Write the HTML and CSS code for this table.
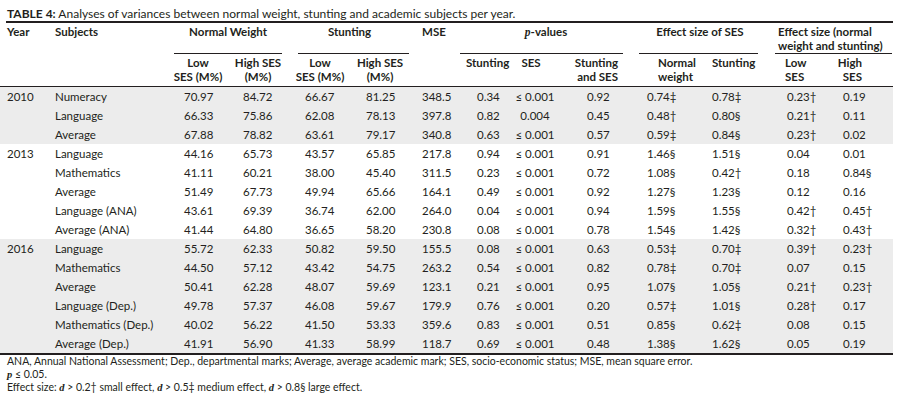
FILE: index.html
```html
<!DOCTYPE html>
<html lang="en">
<head>
<meta charset="utf-8">
<title>Table 4</title>
<link rel="stylesheet" href="styles.css">
</head>
<body>
<div class="page">
  <p class="title"><b>TABLE 4:</b> Analyses of variances between normal weight, stunting and academic subjects per year.</p>
  <table class="t">
    <colgroup>
      <col class="w1"><col class="w2"><col class="w3"><col class="w4"><col class="w5"><col class="w6"><col class="w7">
      <col class="w8"><col class="w9"><col class="w10"><col class="w11"><col class="w12"><col class="w13"><col class="w14">
    </colgroup>
    <thead>
      <tr class="h1">
        <th class="c1">Year</th>
        <th class="c2">Subjects</th>
        <th colspan="2"><div class="grp g-nw">Normal Weight</div></th>
        <th colspan="2"><div class="grp g-st">Stunting</div></th>
        <th class="c7">MSE</th>
        <th colspan="3"><div class="grp g-p"><i class="it">p</i>-values</div></th>
        <th colspan="2"><div class="grp g-es">Effect size of SES</div></th>
        <th colspan="2"><div class="grp g-en">Effect size (normal<br>weight and stunting)</div></th>
      </tr>
      <tr class="h2">
        <th></th>
        <th></th>
        <th class="s3">Low<br>SES (M%)</th>
        <th class="s4">High SES<br>(M%)</th>
        <th class="s5">Low<br>SES (M%)</th>
        <th class="s6">High SES<br>(M%)</th>
        <th></th>
        <th class="s8">Stunting</th>
        <th class="s9">SES</th>
        <th class="s10">Stunting<br>and SES</th>
        <th class="s11">Normal<br>weight</th>
        <th class="s12">Stunting</th>
        <th class="s13">Low<br>SES</th>
        <th class="s14">High<br>SES</th>
      </tr>
    </thead>
    <tbody class="band">
      <tr><td class="c1">2010</td><td class="c2">Numeracy</td><td class="c3">70.97</td><td class="c4">84.72</td><td class="c5">66.67</td><td class="c6">81.25</td><td class="c7">348.5</td><td class="c8">0.34</td><td class="c9">≤ 0.001</td><td class="c10">0.92</td><td class="c11">0.74‡</td><td class="c12">0.78‡</td><td class="c13">0.23†</td><td class="c14">0.19</td></tr>
      <tr><td class="c1"></td><td class="c2">Language</td><td class="c3">66.33</td><td class="c4">75.86</td><td class="c5">62.08</td><td class="c6">78.13</td><td class="c7">397.8</td><td class="c8">0.82</td><td class="c9">0.004</td><td class="c10">0.45</td><td class="c11">0.48†</td><td class="c12">0.80§</td><td class="c13">0.21†</td><td class="c14">0.11</td></tr>
      <tr><td class="c1"></td><td class="c2">Average</td><td class="c3">67.88</td><td class="c4">78.82</td><td class="c5">63.61</td><td class="c6">79.17</td><td class="c7">340.8</td><td class="c8">0.63</td><td class="c9">≤ 0.001</td><td class="c10">0.57</td><td class="c11">0.59‡</td><td class="c12">0.84§</td><td class="c13">0.23†</td><td class="c14">0.02</td></tr>
    </tbody>
    <tbody>
      <tr><td class="c1">2013</td><td class="c2">Language</td><td class="c3">44.16</td><td class="c4">65.73</td><td class="c5">43.57</td><td class="c6">65.85</td><td class="c7">217.8</td><td class="c8">0.94</td><td class="c9">≤ 0.001</td><td class="c10">0.91</td><td class="c11">1.46§</td><td class="c12">1.51§</td><td class="c13">0.04</td><td class="c14">0.01</td></tr>
      <tr><td class="c1"></td><td class="c2">Mathematics</td><td class="c3">41.11</td><td class="c4">60.21</td><td class="c5">38.00</td><td class="c6">45.40</td><td class="c7">311.5</td><td class="c8">0.23</td><td class="c9">≤ 0.001</td><td class="c10">0.72</td><td class="c11">1.08§</td><td class="c12">0.42†</td><td class="c13">0.18</td><td class="c14">0.84§</td></tr>
      <tr><td class="c1"></td><td class="c2">Average</td><td class="c3">51.49</td><td class="c4">67.73</td><td class="c5">49.94</td><td class="c6">65.66</td><td class="c7">164.1</td><td class="c8">0.49</td><td class="c9">≤ 0.001</td><td class="c10">0.92</td><td class="c11">1.27§</td><td class="c12">1.23§</td><td class="c13">0.12</td><td class="c14">0.16</td></tr>
      <tr><td class="c1"></td><td class="c2">Language (ANA)</td><td class="c3">43.61</td><td class="c4">69.39</td><td class="c5">36.74</td><td class="c6">62.00</td><td class="c7">264.0</td><td class="c8">0.04</td><td class="c9">≤ 0.001</td><td class="c10">0.94</td><td class="c11">1.59§</td><td class="c12">1.55§</td><td class="c13">0.42†</td><td class="c14">0.45†</td></tr>
      <tr><td class="c1"></td><td class="c2">Average (ANA)</td><td class="c3">41.44</td><td class="c4">64.80</td><td class="c5">36.65</td><td class="c6">58.20</td><td class="c7">230.8</td><td class="c8">0.08</td><td class="c9">≤ 0.001</td><td class="c10">0.78</td><td class="c11">1.54§</td><td class="c12">1.42§</td><td class="c13">0.32†</td><td class="c14">0.43†</td></tr>
    </tbody>
    <tbody class="band">
      <tr><td class="c1">2016</td><td class="c2">Language</td><td class="c3">55.72</td><td class="c4">62.33</td><td class="c5">50.82</td><td class="c6">59.50</td><td class="c7">155.5</td><td class="c8">0.08</td><td class="c9">≤ 0.001</td><td class="c10">0.63</td><td class="c11">0.53‡</td><td class="c12">0.70‡</td><td class="c13">0.39†</td><td class="c14">0.23†</td></tr>
      <tr><td class="c1"></td><td class="c2">Mathematics</td><td class="c3">44.50</td><td class="c4">57.12</td><td class="c5">43.42</td><td class="c6">54.75</td><td class="c7">263.2</td><td class="c8">0.54</td><td class="c9">≤ 0.001</td><td class="c10">0.82</td><td class="c11">0.78‡</td><td class="c12">0.70‡</td><td class="c13">0.07</td><td class="c14">0.15</td></tr>
      <tr><td class="c1"></td><td class="c2">Average</td><td class="c3">50.41</td><td class="c4">62.28</td><td class="c5">48.07</td><td class="c6">59.69</td><td class="c7">123.1</td><td class="c8">0.21</td><td class="c9">≤ 0.001</td><td class="c10">0.95</td><td class="c11">1.07§</td><td class="c12">1.05§</td><td class="c13">0.21†</td><td class="c14">0.23†</td></tr>
      <tr><td class="c1"></td><td class="c2">Language (Dep.)</td><td class="c3">49.78</td><td class="c4">57.37</td><td class="c5">46.08</td><td class="c6">59.67</td><td class="c7">179.9</td><td class="c8">0.76</td><td class="c9">≤ 0.001</td><td class="c10">0.20</td><td class="c11">0.57‡</td><td class="c12">1.01§</td><td class="c13">0.28†</td><td class="c14">0.17</td></tr>
      <tr><td class="c1"></td><td class="c2">Mathematics (Dep.)</td><td class="c3">40.02</td><td class="c4">56.22</td><td class="c5">41.50</td><td class="c6">53.33</td><td class="c7">359.6</td><td class="c8">0.83</td><td class="c9">≤ 0.001</td><td class="c10">0.51</td><td class="c11">0.85§</td><td class="c12">0.62‡</td><td class="c13">0.08</td><td class="c14">0.15</td></tr>
      <tr><td class="c1"></td><td class="c2">Average (Dep.)</td><td class="c3">41.91</td><td class="c4">56.90</td><td class="c5">41.33</td><td class="c6">58.99</td><td class="c7">118.7</td><td class="c8">0.69</td><td class="c9">≤ 0.001</td><td class="c10">0.48</td><td class="c11">1.38§</td><td class="c12">1.62§</td><td class="c13">0.05</td><td class="c14">0.19</td></tr>
    </tbody>
  </table>
  <div class="notes">
    <p>ANA, Annual National Assessment; Dep., departmental marks; Average, average academic mark; SES, socio-economic status; MSE, mean square error.</p>
    <p><i class="it">p</i> ≤ 0.05.</p>
    <p>Effect size: <i class="it">d</i> &gt; 0.2† small effect, <i class="it">d</i> &gt; 0.5‡ medium effect, <i class="it">d</i> &gt; 0.8§ large effect.</p>
  </div>
</div>
</body>
</html>
```

FILE: styles.css
```css
html, body {
  margin: 0;
  padding: 0;
  background: #ffffff;
}

body {
  font-family: Lato, "Liberation Sans", sans-serif;
  color: #231f20;
}

.page {
  padding-top: 7px;
}

.title {
  margin: 0 5px 0 6px;
  padding-left: 1px;
  font-size: 12px;
  line-height: 14px;
  white-space: nowrap;
  border-bottom: 2px solid #231f20;
}

.title b {
  font-weight: 700;
}

.it {
  font-family: "Liberation Serif", serif;
  font-style: italic;
  font-weight: 700;
}

.t {
  margin: 0;
  width: 893px;
  table-layout: fixed;
  border-collapse: separate;
  border-spacing: 0;
  border-bottom: 2px solid #231f20;
  font-size: 11.5px;
}

.w1 { width: 55px; }
.w2 { width: 117px; }
.w3 { width: 62px; }
.w4 { width: 60px; }
.w5 { width: 62px; }
.w6 { width: 56px; }
.w7 { width: 50px; }
.w8 { width: 46px; }
.w9 { width: 54px; }
.w10 { width: 74px; }
.w11 { width: 64px; }
.w12 { width: 75px; }
.w13 { width: 60px; }
.w14 { width: 58px; }

th {
  font-weight: 700;
  padding: 0;
  vertical-align: top;
  white-space: nowrap;
  text-align: left;
  line-height: 14px;
}

.h1 th {
  padding-top: 2px;
  height: 29px;
  box-sizing: content-box;
}

.h1 th.c1 { padding-left: 7px; }
.h1 th.c7 { padding-left: 10px; }

.grp {
  height: 28px;
  border-bottom: 1px solid #231f20;
  text-align: center;
}

.g-nw { margin: 0 12px 0 2px; }
.g-st { margin: 0 3px 0 4px; padding-right: 8px; }
.g-p { margin: 0 13px 0 -2px; padding-left: 9px; }
.g-es { margin: 0 17px 0 3px; padding-left: 3px; }
.g-en { margin: 0 1px 0 0; padding-left: 3px; text-align: left; }

.h2 th {
  padding-top: 2px;
  padding-bottom: 2px;
  height: 28px;
  border-bottom: 1px solid #231f20;
}

.s3 { text-align: center !important; padding-right: 10px !important; }
.s4 { text-align: center !important; padding-right: 12px !important; }
.s5 { text-align: center !important; padding-right: 10px !important; }
.s6 { text-align: center !important; padding-right: 8px !important; }
.s8 { text-align: center !important; padding-left: 4px !important; }
.s9 { text-align: center !important; padding-right: 8px !important; }
.s10 { text-align: right !important; padding-right: 18px !important; }
.s11 { padding-left: 22px !important; }
.s12 { padding-left: 12px !important; }
.s13 { padding-left: 10px !important; }
.s14 { text-align: right !important; padding-right: 31px !important; }

td {
  padding: 0;
  height: 19px;
  line-height: 19px;
  white-space: nowrap;
  text-align: left;
}

.band td {
  background: #ececec;
}

td.c1 { padding-left: 7px; }
td.c3 { padding-left: 12px; }
td.c4 { padding-left: 9px; }
td.c5 { padding-left: 11px; }
td.c6 { padding-left: 10px; }
td.c7 { padding-left: 10px; }
td.c8 { padding-left: 15px; }
td.c9 { text-align: center; }
td.c10 { padding-left: 25px; }
td.c11 { padding-left: 11px; }
td.c12 { padding-left: 12px; }
td.c13 { padding-left: 12px; }
td.c14 { padding-left: 8px; }

.notes {
  margin-top: 0;
  padding-left: 7px;
  font-size: 10.5px;
  line-height: 13px;
}

.notes p {
  margin: 0;
  white-space: nowrap;
}
```
